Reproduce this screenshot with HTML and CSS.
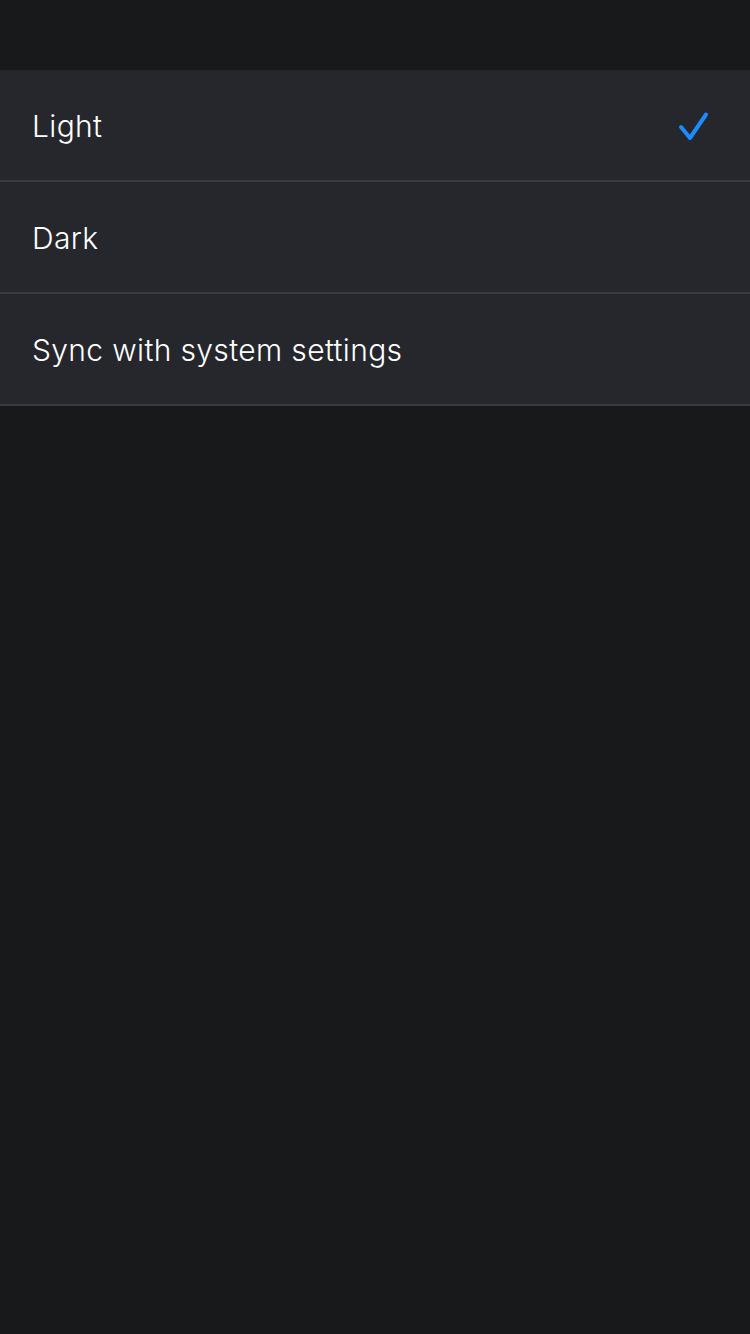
FILE: index.html
```html
<!DOCTYPE html>
<html lang="en">
<head>
<meta charset="utf-8">
<link rel="stylesheet" href="styles.css">
</head>
<body>
<div class="page">
  <div class="topbar"></div>
  <ul class="list">
    <li class="row"><span class="label">Light</span>
      <svg class="check" width="34" height="34" viewBox="0 0 34 34"><path d="M5 19 L14 30 L30 6.5" fill="none" stroke="#1a8cff" stroke-width="4" stroke-linecap="round" stroke-linejoin="round"/></svg>
    </li>
    <li class="row"><span class="label">Dark</span></li>
    <li class="row"><span class="label">Sync with system settings</span></li>
  </ul>
</div>
</body>
</html>
```
FILE: styles.css
```css
html, body {
  margin: 0;
  padding: 0;
  background: #18191b;
}
.page {
  width: 750px;
  min-height: 1334px;
  background: #18191b;
  font-family: Inter, "Noto Sans", sans-serif;
}
.topbar {
  height: 70px;
}
.list {
  list-style: none;
  margin: 0;
  padding: 0;
}
.row {
  height: 110px;
  background: #26272c;
  border-bottom: 2px solid #393a3e;
  display: flex;
  align-items: center;
  justify-content: space-between;
  padding: 0 40px 0 32px;
}
.label {
  color: #ffffff;
  font-size: 30px;
  font-weight: 300;
  letter-spacing: 0.35px;
  margin-top: 2px;
}
.check {
  display: block;
}
```
